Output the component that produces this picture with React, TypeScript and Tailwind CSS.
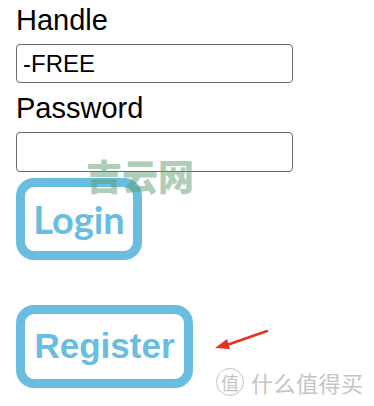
import React from 'react';

const labelFont = { fontFamily: '"Liberation Sans", Arial, sans-serif' };

export default function App() {
    return (
        <div className="relative w-[374px] h-[406px] bg-white overflow-hidden" style={labelFont}>
            <div className="flex flex-col items-start pl-4">
                <div className="text-[29px] leading-[40px] text-black">Handle</div>
                <input
                    defaultValue="-FREE"
                    className="mt-1 w-[277px] h-[39px] border-[1.5px] border-[#6b6b6b] rounded-[4px] px-[6px] text-[24px] text-black outline-none"
                    style={labelFont}
                />
                <div className="mt-[5px] text-[29px] leading-[40px] text-black">Password</div>
                <input
                    type="password"
                    className="mt-1 w-[277px] h-[40px] border-[1.5px] border-[#6b6b6b] rounded-[4px] px-[6px] text-[24px] outline-none"
                />
                <button
                    className="mt-[6px] w-[126px] h-[82px] border-[9px] border-[#69bde0] rounded-[18px] flex items-center justify-center text-[38px] font-bold text-[#69bde0]"
                    style={{ fontFamily: 'Lato, "Open Sans", sans-serif' }}
                >
                    Login
                </button>
                <button className="mt-[45px] w-[177px] h-[83px] border-[9px] border-[#69bde0] rounded-[18px] flex items-center justify-center text-[35px] font-bold text-[#69bde0]">
                    Register
                </button>
            </div>

            {/* watermark over the login button */}
            <div
                className="absolute left-[86px] top-[153px] text-[36px] font-black leading-[44px] text-[#5f9f72] opacity-50 pointer-events-none"
                style={{ fontFamily: '"Noto Sans CJK SC", sans-serif' }}
            >
                吉云网
            </div>

            {/* red arrow */}
            <svg className="absolute left-[210px] top-[324px]" width="64" height="30" viewBox="0 0 64 30">
                <line x1="57" y1="7" x2="14" y2="22" stroke="#e8321e" strokeWidth="2.5" strokeLinecap="round" />
                <polygon points="5,24 17,15 20,25" fill="#e8321e" />
            </svg>

            {/* bottom right watermark */}
            <div
                className="absolute left-[216px] top-[367px] flex items-center gap-[7px] text-[#c4c4c4] pointer-events-none"
                style={{ fontFamily: '"Noto Sans CJK SC", sans-serif' }}
            >
                <div className="w-[28px] h-[28px] rounded-full border-[1.5px] border-[#c4c4c4] flex items-center justify-center text-[18px] leading-none">
                    值
                </div>
                <div className="text-[22px] leading-[30px] tracking-[0.5px]">什么值得买</div>
            </div>
        </div>
    );
}
